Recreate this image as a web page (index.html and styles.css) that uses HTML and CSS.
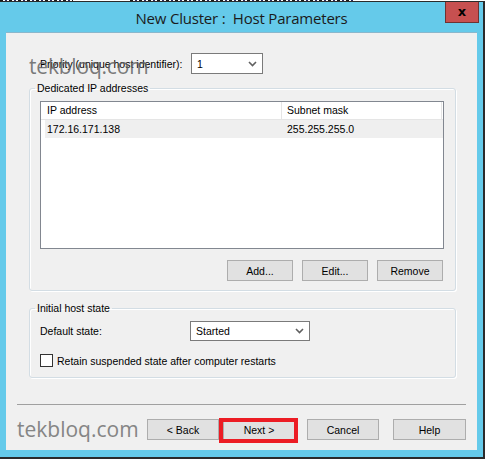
FILE: index.html
```html
<!DOCTYPE html>
<html>
<head>
<meta charset="utf-8">
<link rel="stylesheet" href="styles.css">
</head>
<body>
<div class="desk"><span class="frag f1"></span><span class="frag f2"></span></div>
<div class="window">
  <div class="titlebar">
    <span class="title">New Cluster :&nbsp; Host Parameters</span>
    <span class="close">x</span>
  </div>
  <div class="content">
    <div class="prio">
      <label>Priority (unique host identifier):</label>
      <div class="select sel-prio"><span>1</span><svg class="chev" width="9" height="6" viewBox="0 0 9 6"><path d="M1 1l3.5 3.5L8 1" fill="none" stroke="#606060" stroke-width="1.6"/></svg></div>
      <span class="wm wm-top">tekbloq.com</span>
    </div>
    <fieldset class="group g1">
      <legend>Dedicated IP addresses</legend>
      <div class="list">
        <div class="lhead"><span class="c1">IP address</span><span class="c2">Subnet mask</span></div>
        <div class="lrow"><span class="c1">172.16.171.138</span><span class="c2">255.255.255.0</span></div>
      </div>
      <div class="btnrow">
        <button class="btn">Add...</button>
        <button class="btn">Edit...</button>
        <button class="btn">Remove</button>
      </div>
    </fieldset>
    <fieldset class="group g2">
      <legend>Initial host state</legend>
      <div class="staterow">
        <label>Default state:</label>
        <div class="select sel-state"><span>Started</span><svg class="chev" width="9" height="6" viewBox="0 0 9 6"><path d="M1 1l3.5 3.5L8 1" fill="none" stroke="#606060" stroke-width="1.6"/></svg></div>
      </div>
      <div class="checkrow"><span class="cbox"></span><span>Retain suspended state after computer restarts</span></div>
    </fieldset>
    <div class="sep"></div>
    <div class="footer">
      <span class="wm wm-bottom">tekbloq.com</span>
      <button class="btn fbtn back">&lt; Back</button>
      <span class="nextwrap"><button class="btn fbtn next">Next &gt;</button><span class="redbox"></span></span>
      <button class="btn fbtn cancel">Cancel</button>
      <button class="btn fbtn help">Help</button>
    </div>
  </div>
</div>
</body>
</html>
```

FILE: styles.css
```css
html, body { margin: 0; padding: 0; }
body { background: #fff; width: 485px; height: 459px; overflow: hidden; }

.desk { height: 1px; position: relative; background: #fff; }
.frag { display: block; position: absolute; top: 0; height: 1px;
  background: repeating-linear-gradient(90deg, #1a1a1a 0 3px, #fff 3px 5px, #2a2a60 5px 7px, #fff 7px 9px); }
.f1 { left: 0; width: 73px; }
.f2 { left: 130px; width: 225px; }

.window { box-sizing: border-box; width: 485px; height: 458px; background: #65caea;
  border-top: 1px solid #2b2b2b; border-right: 2px solid #2b2b2b; border-bottom: 2px solid #2b2b2b;
  display: flex; flex-direction: column; }

.titlebar { height: 30px; display: grid; grid-template-columns: 1fr auto 1fr; position: relative; }
.title { grid-column: 2; font: 15px "Open Sans", "Noto Sans", sans-serif; color: #1b1b1b; line-height: 30px; padding-top: 1px; letter-spacing: -0.2px; }
.close { grid-column: 3; justify-self: end; align-self: start; margin-right: 4px; width: 34px; height: 21px;
  box-sizing: border-box; background: #c75050; border: 1px solid #6e3232; border-top: 0;
  color: #000; font: bold 13px "DejaVu Sans", sans-serif; text-align: center; line-height: 19px; }

.content { margin: 0 6px 7px 6px; height: 418px; box-sizing: border-box; background: #f0f0f0;
  border-top: 1px solid #8ab7cc;
  display: flex; flex-direction: column;
  font: 10.5px "Liberation Sans", Arial, sans-serif; color: #000; }

.prio { position: relative; display: flex; align-items: center; height: 21px; margin: 20px 0 0 34px; }
.prio label { width: 151px; }
.select { box-sizing: border-box; height: 21px; background: #fff; border: 1px solid #7a7a7a;
  display: flex; align-items: center; justify-content: space-between; padding: 0 5px 0 5px; }
.sel-prio { width: 72px; }
.sel-state { width: 120px; height: 20px; }
.chev { display: block; }

.wm { font: 21px "Open Sans", "Noto Sans", sans-serif; color: #858585; }
.wm-top { position: absolute; left: -11px; top: -1px; color: rgba(100,100,100,0.85); pointer-events: none; letter-spacing: -0.2px; }

.group { margin: 8px 21px 0 23px; padding: 6px 11px 9px 10px; min-width: 0;
  border: 1px solid #d3dde4; border-radius: 3px; box-shadow: inset 1px 1px 0 #fff, 1px 1px 0 #fff; }
.group legend { padding: 0 2px; margin-left: -5px; line-height: 13px; }

.list { box-sizing: border-box; height: 148px; border: 1px solid #828790; background: #fff; }
.lhead { display: flex; height: 18px; box-sizing: border-box; border-bottom: 1px solid #e5e5e5; line-height: 17px; }
.lhead .c1 { width: 241px; box-sizing: border-box; padding-left: 6px; border-right: 1px solid #e5e5e5; }
.lhead .c2 { flex: 1; padding-left: 5px; border-right: 1px solid #e5e5e5; margin-right: 1px; }
.lrow { display: flex; height: 18px; line-height: 18px; margin-left: 4px; background: #efefef; }
.lrow .c1 { width: 237px; padding-left: 2px; box-sizing: border-box; }
.lrow .c2 { flex: 1; padding-left: 5px; }

.btn { box-sizing: border-box; font: 10.5px "Liberation Sans", Arial, sans-serif; color: #000;
  background: #e1e1e1; border: 1px solid #adadad; padding: 0; margin: 0; }
.btnrow { display: flex; justify-content: flex-end; gap: 9px; margin-top: 11px; margin-right: 1px; }
.btnrow .btn { width: 66px; height: 21px; }

.g2 { margin-top: 11px; padding-bottom: 10px; }
.staterow { display: flex; align-items: center; height: 20px; }
.staterow label { width: 150px; }
.checkrow { display: flex; align-items: center; margin-top: 13px; height: 13px; }
.cbox { width: 13px; height: 13px; box-sizing: border-box; border: 1px solid #333; background: #fff; margin-right: 4px; }

.sep { height: 1px; background: #a0a0a0; margin: 26px 11px 0 11px; }

.footer { display: flex; align-items: center; margin: 14px 0 0 11px; height: 21px; }
.wm-bottom { width: 130px; line-height: 21px; }
.fbtn { width: 72px; height: 21px; }
.nextwrap { position: relative; margin-left: 4px; display: flex; }
.redbox { position: absolute; left: -4px; top: -1px; width: 79px; height: 25px; box-sizing: border-box; border: 4px solid #ec1c24; }
.cancel { margin-left: 12px; }
.help { margin-left: 14px; width: 73px; }
```
